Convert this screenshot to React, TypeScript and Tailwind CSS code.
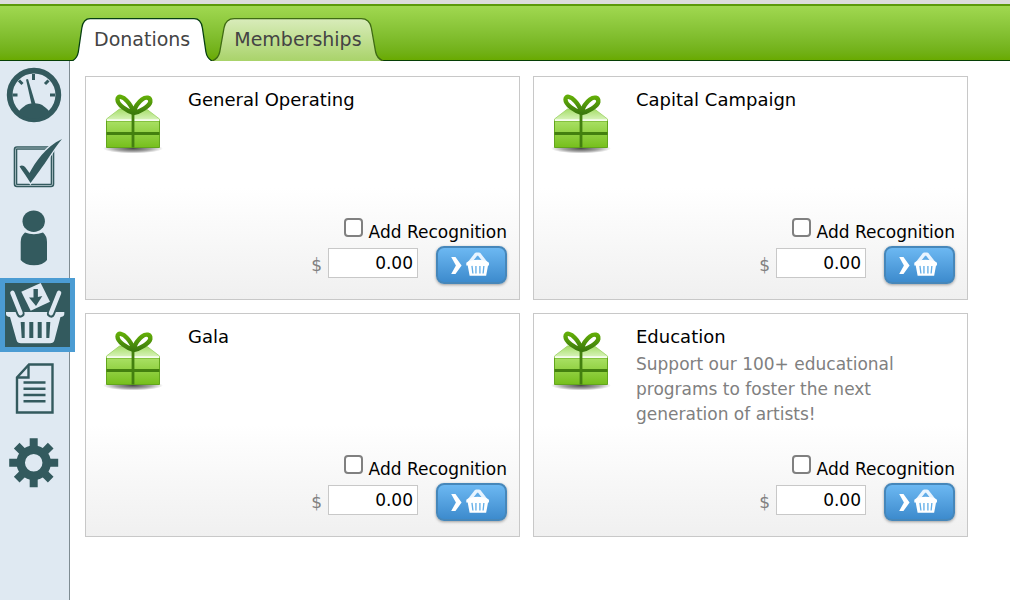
import React, { useState } from 'react';
import { clsx } from 'clsx';

const DARK = '#335a5e';
const LIGHT = '#dfe9f2';

function GaugeIcon() {
  return (
    <svg viewBox="0 0 70 72" className="w-full h-full" fill="none" stroke={DARK}>
      <circle cx="34" cy="33" r="24.3" strokeWidth="5.8" />
      <path d="M18.5 50C20 47 23 45.5 24 44.5C28 40.2 40 40.2 44 44.5C45 45.5 48 47 49.5 50C41 59 27 59 18.5 50Z" fill={DARK} stroke="none" />
      <path d="M26 17.5L31.5 42H35.5L28 17Z" fill={DARK} stroke="none" />
      <path d="M33.5 12V18M12.5 33H17.5M50 33H55M19 18.5L22.5 22M48.5 18.5L45 22" strokeWidth="3" />
    </svg>
  );
}

function CheckIcon() {
  return (
    <svg viewBox="0 0 70 72" className="w-full h-full" fill="none">
      <rect x="15.5" y="14" width="37" height="37.5" rx="1.5" stroke={DARK} strokeWidth="3.6" />
      <rect x="15.5" y="14" width="37" height="37.5" rx="1.5" stroke="#9db3b9" strokeWidth="1" />
      <path
        d="M19.5 32.5C21.500 30.500 24 31.500 25.500 33.500L29.500 39C35 29 45 13 62 5C57 11 53 17 49 23C43 32 36 42 30.500 49C27 43 23 38 19.500 32.500Z"
        fill={DARK}
        stroke={LIGHT}
        strokeWidth="2.5"
        paintOrder="stroke"
      />
    </svg>
  );
}

function PersonIcon() {
  return (
    <svg viewBox="0 0 70 72" className="w-full h-full" fill={DARK}>
      <ellipse cx="33.7" cy="15.2" rx="11.2" ry="10.8" />
      <path d="M25 26.5Q33.7 30 43 26.5Q47 30 47 36V54Q43 59.3 34 59.3Q25 59.3 20.7 54V36Q20.7 30 25 26.5Z" />
    </svg>
  );
}

function BasketIcon() {
  return (
    <svg viewBox="0 0 65 64" className="w-full h-full" fill={LIGHT}>
      <path d="M16.3 8.7L35.7 0L45 18.7L25.7 27.7Z" />
      <path d="M28.5 6H32.9V14L37.3 13L31 23L24 14.500H28.500Z" fill={DARK} />
      <path d="M1 29H59.3V31Q59.3 33.500 55.500 34L49.500 57Q48.700 60.300 45 60.300H16Q12.300 60.300 11.500 57L5 34Q1 33.500 1 31Z" />
      <g fill="none" strokeLinecap="round">
        <path d="M8 11L15.5 30.500M53.500 11L46 30.500" stroke={DARK} strokeWidth="8" />
        <path d="M7.5 10L15.500 30M54 10L46 30" stroke={LIGHT} strokeWidth="4.600" />
      </g>
      <path d="M15.7 39H19.700V55H16.700ZM24.300 39H28.300V55H24.300ZM32.700 39H36.700V55H32.700ZM41.300 39H45.300L44.300 55H41.300Z" fill={DARK} />
    </svg>
  );
}

function DocumentIcon() {
  return (
    <svg viewBox="0 0 70 72" className="w-full h-full" fill="none" stroke={DARK}>
      <path d="M29 12.5H52.5V60.5H17V25.5Z" strokeWidth="2.4" />
      <path d="M28.5 13V25.5H17.5" strokeWidth="2.4" />
      <path d="M23.5 30.5H45.5M23.5 36.800H45.500M23.500 43H45.500M23.500 49.300H45.500" strokeWidth="2.6" />
    </svg>
  );
}

function GearIcon() {
  return (
    <svg viewBox="0 0 70 72" className="w-full h-full" fill="none" stroke={DARK}>
      <circle cx="33.7" cy="38.7" r="13" strokeWidth="8.5" />
      <path
        d="M33.7 14.200V24M33.700 53.400V63.200M9.200 38.700H19M48.400 38.700H58.200M16.700 21.700L24 29M43.400 48.400L50.700 55.700M16.700 55.700L24 48.400M43.400 29L50.700 21.700"
        strokeWidth="8"
      />
    </svg>
  );
}

function GiftIcon() {
  return (
    <svg viewBox="0 0 64 64" className="w-16 h-16 shrink-0" aria-hidden="true">
      <defs>
        <linearGradient id="giftLid" x1="0" y1="0" x2="0" y2="1">
          <stop offset="0" stopColor="#a6de69" />
          <stop offset="1" stopColor="#e2f7ca" />
        </linearGradient>
        <linearGradient id="giftBox" x1="0" y1="0" x2="0" y2="1">
          <stop offset="0" stopColor="#a9e064" />
          <stop offset="1" stopColor="#76bf1c" />
        </linearGradient>
        <linearGradient id="giftBow" x1="0" y1="0" x2="0" y2="1">
          <stop offset="0" stopColor="#62ad08" />
          <stop offset="1" stopColor="#3c7a0c" />
        </linearGradient>
        <radialGradient id="giftShadow">
          <stop offset="0" stopColor="#000" stopOpacity="0.7" />
          <stop offset="0.6" stopColor="#000" stopOpacity="0.35" />
          <stop offset="1" stopColor="#000" stopOpacity="0" />
        </radialGradient>
      </defs>
      <ellipse cx="32" cy="56.5" rx="30" ry="5" fill="url(#giftShadow)" />
      <path d="M18.500 17H45.500L58.500 27V30H5.500V27Z" fill="url(#giftLid)" stroke="#9bd062" strokeWidth="0.8" />
      <path d="M5.5 29H58.5V55.5H5.5Z" fill="url(#giftBox)" stroke="#62a51d" />
      <path d="M6 28.2H58" stroke="#f6fdee" strokeWidth="1.8" />
      <path d="M32 20V55.5M5.5 41.5H58.5" stroke="#43800f" strokeWidth="2.8" fill="none" />
      <path
        d="M32.5 21C26 19 16.500 13 16.500 7.500C16.500 3 22 4.500 26 9C29 12 31 16 32.500 20C34 15.500 37 10.500 41 7.500C45 4.500 49.800 5 49.300 10C48.500 14 39 20 32.500 21Z"
        fill="#fff"
        stroke="url(#giftBow)"
        strokeWidth="4.4"
        strokeLinejoin="round"
      />
    </svg>
  );
}

function AddToBasketIcon() {
  return (
    <svg viewBox="0 0 69 36" className="w-full h-full" fill="none" aria-hidden="true">
      <path d="M13 9.5H17.5L24 18.5L17.5 27.5H13L18 18.5Z" fill="#fff" />
      <path d="M32.5 15.5L39.500 6.500H42.500L49.500 15.500" stroke="#e8f4ff" strokeWidth="3.6" strokeLinejoin="round" />
      <path d="M29 15.5Q33 12.500 41 12.500Q49 12.500 53 15.500V18.500H52L50 29.500H32.500L30.500 18.500H29Z" fill="#fff" />
      <path d="M35 19L36 27M39.2 19V27M43.400 19V27M47.600 19L46.800 27" stroke="#62aee8" strokeWidth="1.4" />
    </svg>
  );
}

const NAV_ITEMS = [
  { id: 'dashboard', label: 'Dashboard', Icon: GaugeIcon },
  { id: 'tasks', label: 'Tasks', Icon: CheckIcon },
  { id: 'patrons', label: 'Patrons', Icon: PersonIcon },
  { id: 'sales', label: 'Sales', Icon: BasketIcon },
  { id: 'reports', label: 'Reports', Icon: DocumentIcon },
  { id: 'settings', label: 'Settings', Icon: GearIcon },
];

function Sidebar() {
  return (
    <nav className="w-[70px] shrink-0 pt-px bg-[#dfe9f2] border-r border-[#7f8c93]" aria-label="Main">
      {NAV_ITEMS.map(({ id, label, Icon }) => {
        const selected = id === 'sales';
        return (
          <button
            key={id}
            type="button"
            aria-label={label}
            className={clsx(
              'block',
              selected ? 'relative w-[75px] h-[74px] bg-[#335a5e] border-5 border-[#4b9cd3]' : 'w-[70px] h-[72px]'
            )}
          >
            <Icon />
          </button>
        );
      })}
    </nav>
  );
}

interface TabProps {
  label: string;
  active: boolean;
  onSelect: () => void;
}

function Tab({ label, active, onSelect }: TabProps) {
  return (
    <button
      type="button"
      role="tab"
      aria-selected={active}
      onClick={onSelect}
      className={clsx('relative h-[43px] px-[22px] text-[19px] leading-[43px] text-[#444]', active && 'z-10')}
    >
      {/* Sloped tab outline, drawn behind the label */}
      <svg viewBox="0 0 100 43" preserveAspectRatio="none" className="absolute inset-0 w-full h-full" aria-hidden="true">
        <defs>
          <linearGradient id="tabIdle" x1="0" y1="0" x2="0" y2="1">
            <stop offset="0" stopColor="#d9ecbb" />
            <stop offset="1" stopColor="#a9d36a" />
          </linearGradient>
        </defs>
        <path
          d="M0 43C3 41 4 38 4.500 34L7 10Q8 0.700 13 0.700H87Q92 0.700 93 10L95.500 34C96 38 97 41 100 43"
          fill={active ? '#fff' : 'url(#tabIdle)'}
          stroke={active ? '#063f12' : '#3f6b14'}
          strokeWidth="1.3"
          vectorEffect="non-scaling-stroke"
        />
      </svg>
      <span className="relative">{label}</span>
    </button>
  );
}

interface Fund {
  id: string;
  name: string;
  description?: string;
}

const FUNDS: Fund[] = [
  { id: 'general', name: 'General Operating' },
  { id: 'capital', name: 'Capital Campaign' },
  { id: 'gala', name: 'Gala' },
  {
    id: 'education',
    name: 'Education',
    description: 'Support our 100+ educational programs to foster the next generation of artists!',
  },
];

function FundCard({ fund }: { fund: Fund }) {
  const [amount, setAmount] = useState('0.00');
  const [recognition, setRecognition] = useState(false);

  return (
    <section className="flex flex-col min-h-[224px] pt-[11px] pr-3 pb-[15px] pl-[15px] border border-[#c8c8c8] bg-linear-to-b from-white from-50% to-[#f0f0f0]">
      <div className="flex gap-[23px]">
        <div className="pt-1">
          <GiftIcon />
        </div>
        <div>
          <h2 className="text-[18px] leading-6 text-black">{fund.name}</h2>
          {fund.description && (
            <p className="max-w-[280px] pt-[3px] text-[17px] leading-[25px] text-[#808080]">{fund.description}</p>
          )}
        </div>
      </div>

      <div className="flex flex-col items-end gap-[2px] mt-auto">
        <label className="flex items-start gap-[6px] text-[17px] leading-6 text-black">
          <input
            type="checkbox"
            checked={recognition}
            onChange={(e) => setRecognition(e.target.checked)}
            className="appearance-none w-[19px] h-[19px] bg-white border-2 border-[#808080] rounded-[4px] checked:bg-[#4b9cd3]"
          />
          <span className="pt-[2px]">Add Recognition</span>
        </label>
        <div className="flex items-center">
          <label htmlFor={fund.id} className="text-[17px] leading-6 text-[#808080]">
            $
          </label>
          <input
            id={fund.id}
            type="text"
            value={amount}
            onChange={(e) => setAmount(e.target.value)}
            className="w-[90px] h-[30px] mb-1 ml-[6px] mr-[18px] pr-1 bg-white border border-[#c8c8c8] text-[17px] text-right text-black"
          />
          <button
            type="button"
            aria-label={`Add ${fund.name} to basket`}
            className="w-[71px] h-[38px] bg-linear-to-b from-[#6cb8f2] to-[#3d8bcd] border-2 border-[#4687ba] rounded-lg shadow-[0_1px_3px_rgba(0,0,0,0.35)]"
          >
            <AddToBasketIcon />
          </button>
        </div>
      </div>
    </section>
  );
}

export default function App() {
  const [tab, setTab] = useState('Donations');

  return (
    <div className="flex flex-col min-h-screen bg-white font-['DejaVu_Sans',Verdana,sans-serif]">
      <header className="border-t-4 border-[#dcdcdc]">
        <div className="flex items-end h-[57px] pl-[72px] bg-linear-to-b from-[#a0d850] to-[#69aa00] border-t-2 border-t-[#5b9a0b] border-b border-b-[#063f06]">
          <div role="tablist" className="flex -mb-px">
            {['Donations', 'Memberships'].map((label) => (
              <Tab key={label} label={label} active={tab === label} onSelect={() => setTab(label)} />
            ))}
          </div>
        </div>
      </header>

      <div className="flex flex-1">
        <Sidebar />
        <main className="flex-1 pt-[15px] pr-[42px] pb-4 pl-[15px]">
          <div className="grid grid-cols-2 gap-[13px]">
            {FUNDS.map((fund) => (
              <FundCard key={fund.id} fund={fund} />
            ))}
          </div>
        </main>
      </div>
    </div>
  );
}
